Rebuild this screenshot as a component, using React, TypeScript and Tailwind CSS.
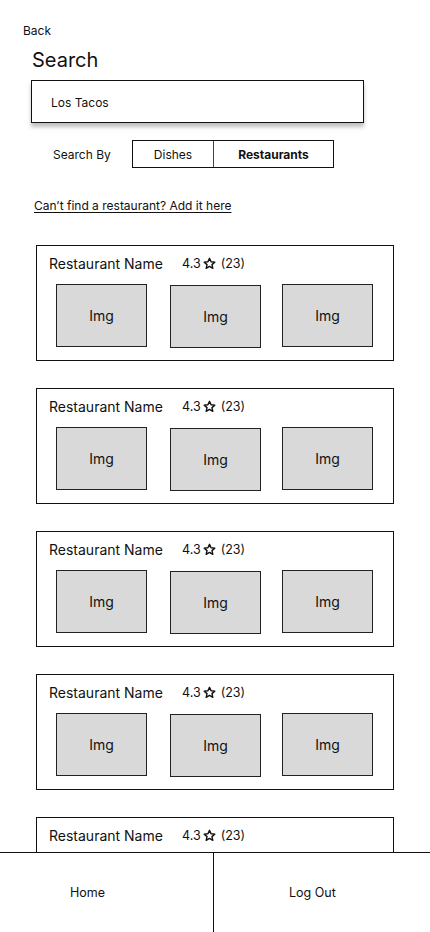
const cards = [1, 2, 3, 4, 5];

const ImgBox = ({ offset }: { offset?: boolean }) => (
  <div
    className={`w-[91px] h-[63px] border border-[#222] bg-[#d9d9d9] flex items-center justify-center text-[14px] text-[#111] ${
      offset ? 'mt-px' : ''
    }`}
  >
    Img
  </div>
);

const RestaurantCard = () => (
  <div className="ml-[36px] w-[358px] h-[116px] shrink-0 border border-[#111] bg-white">
    <div className="flex items-center pl-[12px] pt-[6px] h-[28px]">
      <span className="w-[133px] text-[14px] text-[#111]">Restaurant Name</span>
      <span className="flex items-center pt-[2px] text-[12.5px] text-[#111]">
        4.3
        <svg viewBox="0 0 24 24" className="w-[13px] h-[13px] mx-[2px] -mt-[2px]" fill="none" stroke="#111" strokeWidth="2.6" strokeLinejoin="round">
          <path d="M12 2.5l2.9 6.3 6.9.7-5.2 4.6 1.5 6.8L12 17.4l-6.1 3.5 1.5-6.8-5.2-4.6 6.9-.7z" />
        </svg>
        <span className="ml-[3px]">(23)</span>
      </span>
    </div>
    <div className="flex items-start pl-[19px] mt-[10px]">
      <ImgBox />
      <div className="ml-[23px]">
        <ImgBox offset />
      </div>
      <div className="ml-[21px]">
        <ImgBox />
      </div>
    </div>
  </div>
);

export default function App() {
  return (
    <div
      className="flex flex-col w-[430px] h-[932px] overflow-hidden bg-white text-[#111]"
      style={{ fontFamily: 'Inter, "Noto Sans", sans-serif' }}
    >
      <div className="flex flex-col h-[852px] shrink-0 overflow-hidden">
        <div className="pl-[23px] pt-[23px] text-[12px] leading-[16px]">Back</div>
        <h1 className="pl-[32px] mt-[9px] text-[20px] leading-[24px]">Search</h1>
        <div className="ml-[31px] mt-[8px] w-[333px] h-[43px] shrink-0 border border-[#111] shadow-[0_4px_4px_rgba(0,0,0,0.25)] flex items-center pl-[19px] pt-[2px] text-[12px]">
          Los Tacos
        </div>
        <div className="flex items-center mt-[17px] h-[28px] shrink-0">
          <span className="pl-[53px] w-[132px] pt-[2px] text-[12px]">Search By</span>
          <div className="flex h-[28px] border border-[#111] text-[12px]">
            <div className="w-[81px] flex items-center justify-center pt-[2px] border-r border-[#444]">Dishes</div>
            <div className="w-[119px] flex items-center justify-center pt-[2px] font-bold">Restaurants</div>
          </div>
        </div>
        <a className="ml-[34px] mt-[29px] self-start text-[12px] leading-[18px] underline underline-offset-2">
          Can’t find a restaurant? Add it here
        </a>
        <div className="flex flex-col gap-[27px] mt-[30px]">
          {cards.map((c) => (
            <RestaurantCard key={c} />
          ))}
        </div>
      </div>
      <nav className="w-[430px] h-[80px] shrink-0 border-t border-[#111] bg-white flex">
        <div className="w-[214px] border-r border-[#111] flex items-center pl-[70px] pt-[2px] text-[12.5px]">Home</div>
        <div className="flex-1 flex items-center pl-[75px] pt-[2px] text-[12.5px]">Log Out</div>
      </nav>
    </div>
  );
}
